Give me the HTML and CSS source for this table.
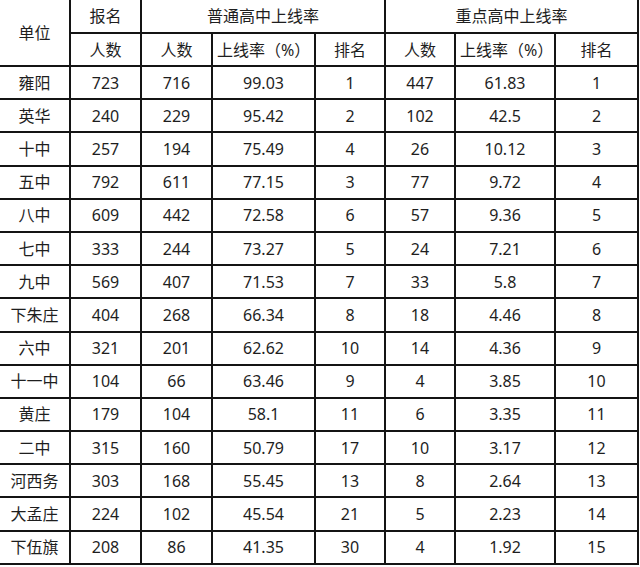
FILE: index.html
```html
<!DOCTYPE html>
<html>
<head>
<meta charset="utf-8">
<link rel="stylesheet" href="styles.css">
</head>
<body>
<table class="grid">
  <colgroup>
    <col class="c1"><col class="c2"><col class="c3"><col class="c4"><col class="c5"><col class="c6"><col class="c7"><col class="c8">
  </colgroup>
  <thead>
    <tr class="hrow top">
      <th rowspan="2" class="first">单位</th>
      <th>报名</th>
      <th colspan="3">普通高中上线率</th>
      <th colspan="3" class="last">重点高中上线率</th>
    </tr>
    <tr class="hrow">
      <th>人数</th>
      <th>人数</th>
      <th class="left">上线率（%）</th>
      <th>排名</th>
      <th>人数</th>
      <th class="left">上线率（%）</th>
      <th class="last">排名</th>
    </tr>
  </thead>
  <tbody>
    <tr><td class="first">雍阳</td><td>723</td><td>716</td><td>99.03</td><td>1</td><td>447</td><td>61.83</td><td class="last">1</td></tr>
    <tr><td class="first">英华</td><td>240</td><td>229</td><td>95.42</td><td>2</td><td>102</td><td>42.5</td><td class="last">2</td></tr>
    <tr><td class="first">十中</td><td>257</td><td>194</td><td>75.49</td><td>4</td><td>26</td><td>10.12</td><td class="last">3</td></tr>
    <tr><td class="first">五中</td><td>792</td><td>611</td><td>77.15</td><td>3</td><td>77</td><td>9.72</td><td class="last">4</td></tr>
    <tr><td class="first">八中</td><td>609</td><td>442</td><td>72.58</td><td>6</td><td>57</td><td>9.36</td><td class="last">5</td></tr>
    <tr><td class="first">七中</td><td>333</td><td>244</td><td>73.27</td><td>5</td><td>24</td><td>7.21</td><td class="last">6</td></tr>
    <tr><td class="first">九中</td><td>569</td><td>407</td><td>71.53</td><td>7</td><td>33</td><td>5.8</td><td class="last">7</td></tr>
    <tr><td class="first">下朱庄</td><td>404</td><td>268</td><td>66.34</td><td>8</td><td>18</td><td>4.46</td><td class="last">8</td></tr>
    <tr><td class="first">六中</td><td>321</td><td>201</td><td>62.62</td><td>10</td><td>14</td><td>4.36</td><td class="last">9</td></tr>
    <tr><td class="first">十一中</td><td>104</td><td>66</td><td>63.46</td><td>9</td><td>4</td><td>3.85</td><td class="last">10</td></tr>
    <tr><td class="first">黄庄</td><td>179</td><td>104</td><td>58.1</td><td>11</td><td>6</td><td>3.35</td><td class="last">11</td></tr>
    <tr><td class="first">二中</td><td>315</td><td>160</td><td>50.79</td><td>17</td><td>10</td><td>3.17</td><td class="last">12</td></tr>
    <tr><td class="first">河西务</td><td>303</td><td>168</td><td>55.45</td><td>13</td><td>8</td><td>2.64</td><td class="last">13</td></tr>
    <tr><td class="first">大孟庄</td><td>224</td><td>102</td><td>45.54</td><td>21</td><td>5</td><td>2.23</td><td class="last">14</td></tr>
    <tr><td class="first">下伍旗</td><td>208</td><td>86</td><td>41.35</td><td>30</td><td>4</td><td>1.92</td><td class="last">15</td></tr>
  </tbody>
</table>
</body>
</html>
```

FILE: styles.css
```css
html, body {
  margin: 0;
  padding: 0;
  background: #ffffff;
}

.grid {
  border-collapse: collapse;
  table-layout: fixed;
  width: 638px;
  font-family: "Noto Sans", "Noto Sans CJK SC", sans-serif;
  font-size: 16px;
  color: #1e1e1e;
}

.c1 { width: 70px; }
.c2 { width: 71px; }
.c3 { width: 71px; }
.c4 { width: 103px; }
.c5 { width: 70px; }
.c6 { width: 70px; }
.c7 { width: 100px; }
.c8 { width: 83px; }

.grid th,
.grid td {
  border: 2px solid #141414;
  padding: 0;
  text-align: center;
  vertical-align: middle;
  font-weight: normal;
  line-height: 20px;
  white-space: nowrap;
}

.grid th.left {
  text-align: left;
  padding-left: 4px;
}

.hrow {
  height: 33px;
}

.hrow.top th {
  border-top: none;
}

.grid tbody tr {
  height: 33.2px;
}

.grid .first {
  border-left: none;
}
```
